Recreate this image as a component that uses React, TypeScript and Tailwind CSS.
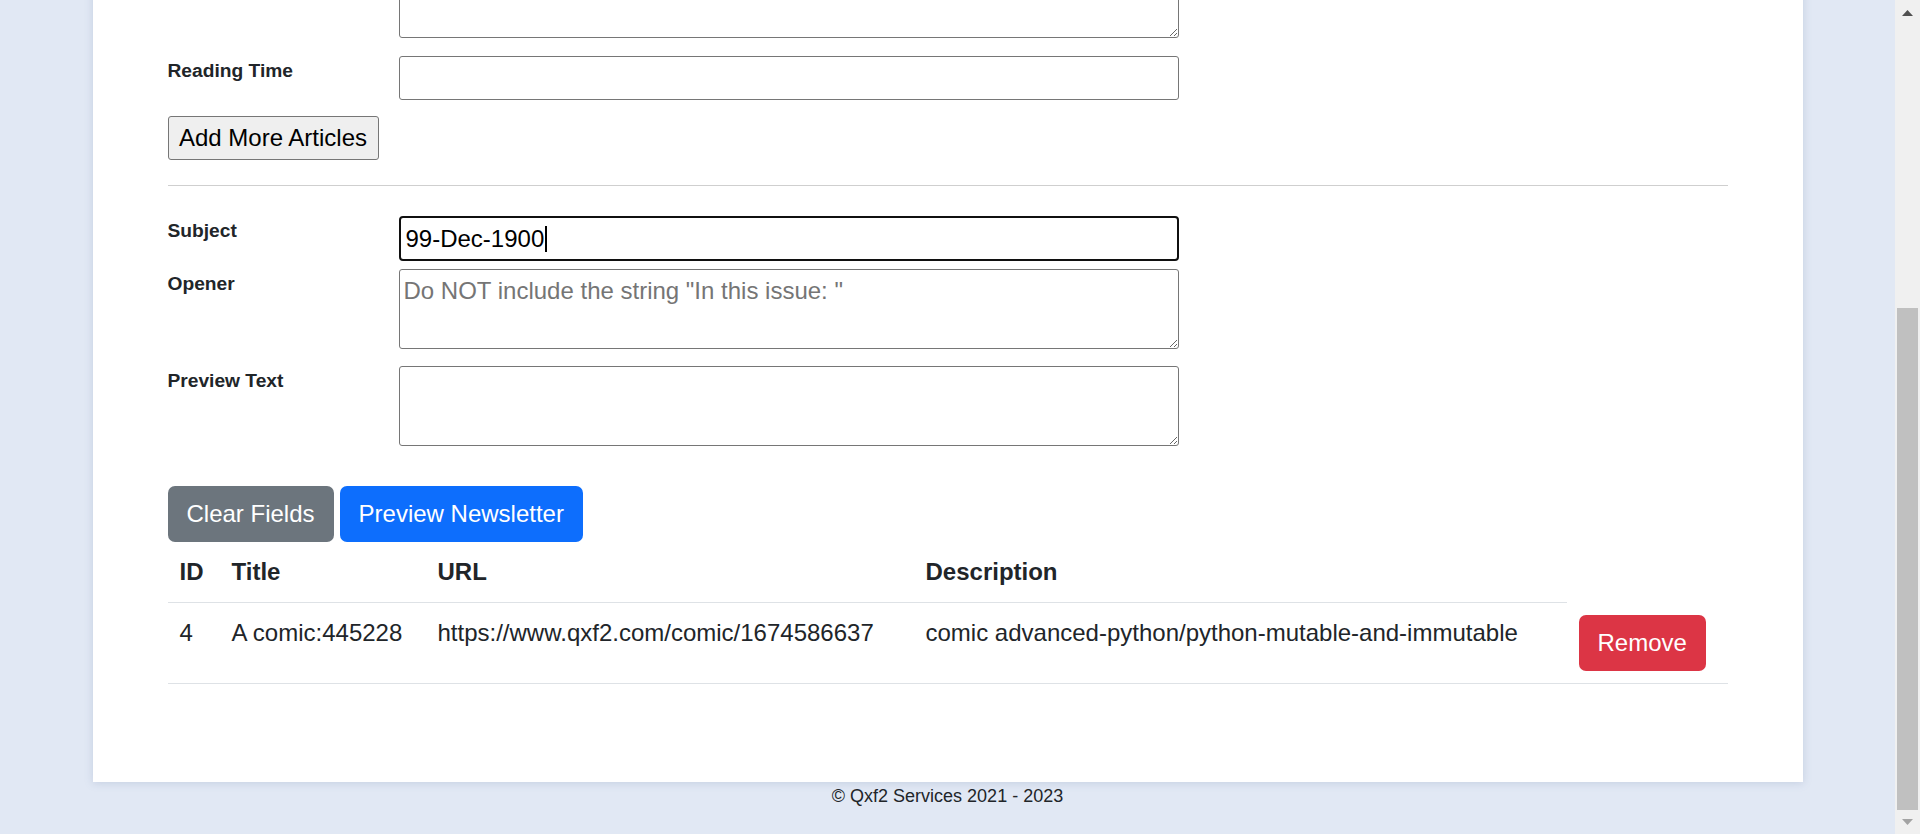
import type { ReactNode } from 'react';

const font = "font-['Liberation_Sans',Arial,Helvetica,sans-serif]";

const columns = ['ID', 'Title', 'URL', 'Description'];

const articles = [
  {
    id: 4,
    title: 'A comic:445228',
    url: 'https://www.qxf2.com/comic/1674586637',
    description: 'comic advanced-python/python-mutable-and-immutable',
  },
];

function FieldRow({ label, className = '', children }: { label: string; className?: string; children: ReactNode }) {
  return (
    <div className={`flex items-start ${className}`}>
      <label className="w-[231px] shrink-0 pt-[1px] text-[19.2px] font-bold leading-[28.8px] text-[#212529]">{label}</label>
      {children}
    </div>
  );
}

function TextBox({ placeholder }: { placeholder?: string }) {
  return (
    <textarea
      placeholder={placeholder}
      className="block h-[80px] w-[780px] resize rounded-[3px] border border-[#767676] bg-white px-[4px] py-[3px] text-[24px] leading-[36px] text-black outline-none placeholder:text-[#757575]"
    />
  );
}

function Scrollbar() {
  return (
    <div className="flex h-full w-[25px] shrink-0 flex-col bg-[#f0f0f0]">
      <div className="flex h-[25px] items-center justify-center">
        <svg width="11" height="6" viewBox="0 0 11 6">
          <path d="M0 6 L5.5 0 L11 6 Z" fill="#505050" />
        </svg>
      </div>
      <div className="flex-1 px-[2px]">
        <div className="mt-[283px] h-[502px] bg-[#c0c0c0]" />
      </div>
      <div className="flex h-[24px] items-center justify-center">
        <svg width="11" height="6" viewBox="0 0 11 6">
          <path d="M0 0 L5.5 6 L11 0 Z" fill="#a3a3a3" />
        </svg>
      </div>
    </div>
  );
}

export default function App() {
  return (
    <div className={`flex h-[834px] w-full overflow-hidden bg-[#e1e8f4] text-[#212529] ${font}`}>
      <div className="flex min-w-0 flex-1 flex-col">
        <main className="mx-auto -mt-[42px] w-[1710px] bg-white px-[75px] pb-[98px] shadow-[0_1px_8px_rgba(110,130,170,0.25)]">
          {/* row scrolled above the fold: only the bottom of its textarea shows */}
          <FieldRow label="">
            <TextBox />
          </FieldRow>
          <FieldRow label="Reading Time" className="mt-[18px]">
            <input
              type="text"
              className="block h-[44px] w-[780px] rounded-[3px] border border-[#767676] bg-white px-[6px] text-[24px] text-black outline-none"
            />
          </FieldRow>
          <button className="mt-[16px] block h-[44px] w-[211px] rounded-[3px] border border-[#767676] bg-[#efefef] text-[24px] leading-[36px] text-black">
            Add More Articles
          </button>
          <hr className="mt-[25px] border-[#cfcfcf]" />

          <FieldRow label="Subject" className="mt-[30px]">
            <div className="flex h-[45px] w-[780px] items-center rounded-[4px] border-2 border-[#101010] bg-white px-[5px] text-[24px] text-black shadow-[0_0_0_1px_rgba(255,255,255,0.9)]">
              <span>99-Dec-1900</span>
              <span className="ml-[1px] inline-block h-[26px] w-[1.5px] bg-black" />
            </div>
          </FieldRow>
          <FieldRow label="Opener" className="mt-[8px]">
            <TextBox placeholder={'Do NOT include the string "In this issue: "'} />
          </FieldRow>
          <FieldRow label="Preview Text" className="mt-[17px]">
            <TextBox />
          </FieldRow>

          <div className="mt-[40px] flex gap-[6px]">
            <button className="h-[56px] rounded-[7px] bg-[#6c757d] px-[19px] text-[24px] leading-[36px] text-white">
              Clear Fields
            </button>
            <button className="h-[56px] rounded-[7px] bg-[#0d6efd] px-[19px] text-[24px] leading-[36px] text-white">
              Preview Newsletter
            </button>
          </div>

          <table className="w-full table-fixed border-collapse text-[24px] leading-[36px]">
            <colgroup>
              <col className="w-[52px]" />
              <col className="w-[206px]" />
              <col className="w-[488px]" />
              <col className="w-[653px]" />
              <col className="w-[161px]" />
            </colgroup>
            <thead>
              <tr>
                {columns.map((c) => (
                  <th key={c} className="border-b border-[#dee2e6] p-[12px] text-left align-top font-bold">
                    {c}
                  </th>
                ))}
              </tr>
            </thead>
            <tbody>
              {articles.map((a) => (
                <tr key={a.id}>
                  <td className="border-b border-[#dee2e6] p-[12px] align-top">{a.id}</td>
                  <td className="whitespace-nowrap border-b border-[#dee2e6] p-[12px] align-top">{a.title}</td>
                  <td className="whitespace-nowrap border-b border-[#dee2e6] p-[12px] align-top">{a.url}</td>
                  <td className="whitespace-nowrap border-b border-[#dee2e6] p-[12px] align-top">{a.description}</td>
                  <td className="border-b border-[#dee2e6] p-[12px] align-top">
                    <button className="block h-[56px] rounded-[7px] bg-[#dc3545] px-[19px] text-[24px] leading-[36px] text-white">
                      Remove
                    </button>
                  </td>
                </tr>
              ))}
            </tbody>
          </table>
        </main>
        <footer className="pt-[1px] text-center text-[18px] leading-[27px] text-[#212529]">© Qxf2 Services 2021 - 2023</footer>
      </div>
      <Scrollbar />
    </div>
  );
}
